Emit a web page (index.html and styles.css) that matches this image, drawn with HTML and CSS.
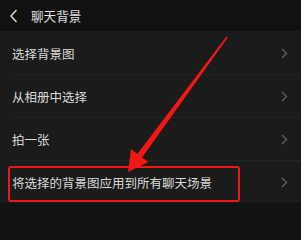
FILE: index.html
```html
<!DOCTYPE html>
<html lang="zh">
<head>
<meta charset="utf-8">
<link rel="stylesheet" href="styles.css">
</head>
<body>
<div class="page">
  <header class="topbar">
    <svg class="back" width="10" height="14" viewBox="0 0 10 14"><path d="M7.5 1 L2 7 L7.5 13" fill="none" stroke="#d0d0d0" stroke-width="1.6"/></svg>
    <span class="title">聊天背景</span>
  </header>
  <ul class="list">
    <li class="row"><span>选择背景图</span><svg class="chev" width="7" height="11" viewBox="0 0 7 11"><path d="M1 1 L5.5 5.5 L1 10" fill="none" stroke="#5f5f5f" stroke-width="1.4"/></svg></li>
    <li class="row"><span>从相册中选择</span><svg class="chev" width="7" height="11" viewBox="0 0 7 11"><path d="M1 1 L5.5 5.5 L1 10" fill="none" stroke="#5f5f5f" stroke-width="1.4"/></svg></li>
    <li class="row"><span>拍一张</span><svg class="chev" width="7" height="11" viewBox="0 0 7 11"><path d="M1 1 L5.5 5.5 L1 10" fill="none" stroke="#5f5f5f" stroke-width="1.4"/></svg></li>
    <li class="row"><span>将选择的背景图应用到所有聊天场景</span><svg class="chev" width="7" height="11" viewBox="0 0 7 11"><path d="M1 1 L5.5 5.5 L1 10" fill="none" stroke="#5f5f5f" stroke-width="1.4"/></svg></li>
  </ul>
  <div class="highlight"></div>
  <svg class="arrow" width="301" height="240" viewBox="0 0 301 240">
    <polygon points="226.4,36.5 227.8,37.6 142.1,157.5 148.5,162 128,172 131,149 137.3,154.1" fill="#f01812"/>
  </svg>
</div>
</body>
</html>
```
FILE: styles.css
```css
* { box-sizing: border-box; }
html, body { margin: 0; padding: 0; }
body {
  background: #121212;
  font-family: "Noto Sans CJK SC", "Noto Sans", sans-serif;
  color: #dadada;
}
.page {
  position: relative;
  width: 301px;
  height: 240px;
  overflow: hidden;
  background: #121212;
}
.topbar {
  height: 31px;
  display: flex;
  align-items: center;
  padding-left: 9px;
  gap: 12px;
  background: #111111;
}
.back { display: block; }
.title {
  font-size: 12.6px;
  color: #e0e0e0;
}
.list {
  list-style: none;
  margin: 0;
  padding: 0;
  background: #1b1b1b;
}
.row {
  height: 43px;
  display: flex;
  align-items: center;
  justify-content: space-between;
  padding: 2px 12px 0 12px;
  font-size: 12.5px;
  position: relative;
}
.row + .row::before {
  content: "";
  position: absolute;
  left: 10px;
  right: 0;
  top: 0;
  height: 1px;
  background: #222222;
}
.chev { display: block; margin-right: 1px; }
.highlight {
  position: absolute;
  left: 8px;
  top: 166px;
  width: 232px;
  height: 36px;
  border: 2px solid #f01812;
  border-radius: 3px;
}
.arrow {
  position: absolute;
  left: 0;
  top: 0;
}
```
